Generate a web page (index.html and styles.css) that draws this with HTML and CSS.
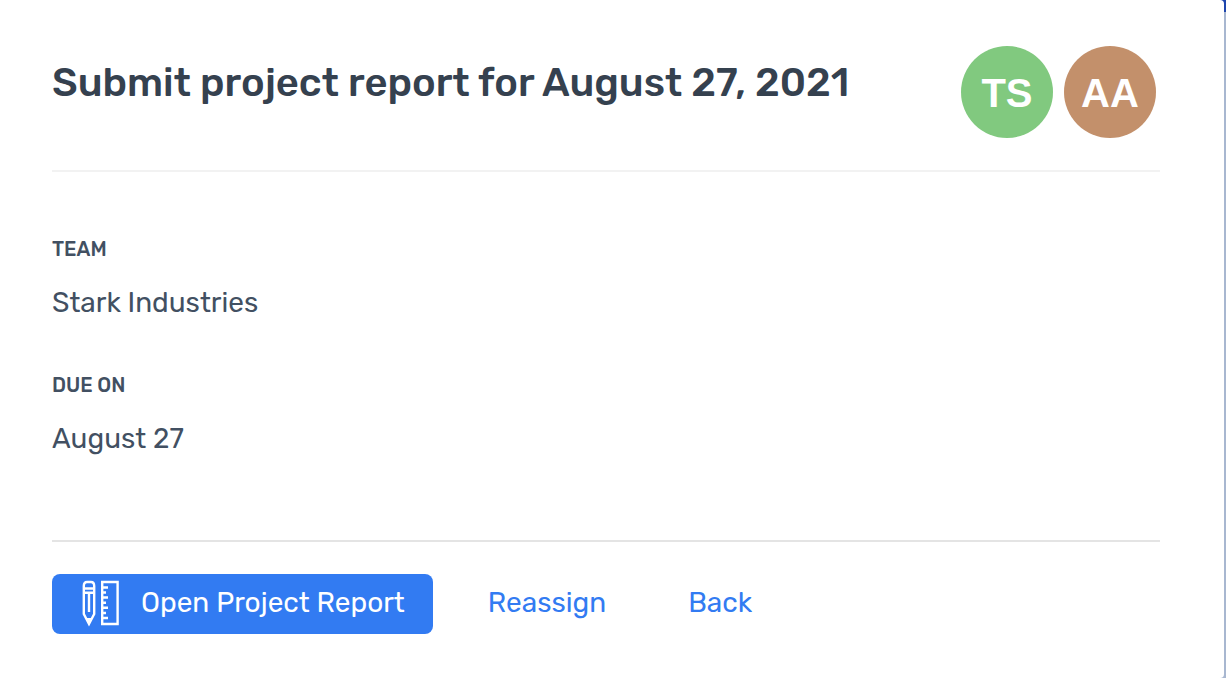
FILE: index.html
```
<!DOCTYPE html>
<html lang="en">
<head>
  <meta charset="UTF-8">
  <title>Submit project report</title>
  <link rel="stylesheet" href="styles.css">
</head>
<body>

  <main class="card">
    <header class="card-header">
      <h1>Submit project report for August 27, 2021</h1>
      <div class="avatars">
        <span class="avatar green">TS</span>
        <span class="avatar brown">AA</span>
      </div>
    </header>

    <dl class="details">
      <dt>TEAM</dt>
      <dd>Stark Industries</dd>
      <dt>DUE ON</dt>
      <dd>August 27</dd>
    </dl>

    <footer class="actions">
      <button type="button" class="primary">
        <svg class="icon" width="38" height="48" viewBox="0 2 38 48" fill="none" stroke="currentColor" stroke-width="2.4" aria-hidden="true">
          <!-- pencil -->
          <path d="M1.800 36V8Q1.800 4 5 4H9Q12.200 4 12.200 8V36L7 46ZM2 10.500H12M2 14.800H12M7 16V34"/>
          <path d="M3.500 40H10.500L7 47.500Z" fill="currentColor" stroke="none"/>
          <!-- ruler -->
          <path d="M20.200 4H35.600V46H20.200ZM20 9.500H26M20 14.500H24M20 19.500H26M20 24.700H24M20 29.800H26M20 35H24M20 40H26"/>
        </svg>
        Open Project Report
      </button>
      <button type="button" class="plain">Reassign</button>
      <button type="button" class="plain">Back</button>
    </footer>
  </main>

</body>
</html>
```

FILE: styles.css
```
body {
  margin: 0;
  background: linear-gradient(#1d45ad 12px, #a8b7d0 12px);
  font-family: Rubik, Roboto, sans-serif;
  color: #425062;
}
.card {
  box-sizing: border-box;
  min-height: 100vh;
  margin-right: 2px;
  padding: 46px 64px 44px 52px;
  background: #fff;
  border-radius: 0 4px 4px 0;
}
.card-header {
  display: flex;
  justify-content: space-between;
  padding-bottom: 32px;
  padding-right: 4px;
  border-bottom: 2px solid #f2f2f2;
}
h1 {
  margin: 13px 0 0;
  font-size: 40px;
  line-height: 48px;
  font-weight: 500;
  color: #35414f;
}
.avatars {
  display: flex;
  gap: 11px;
}
.avatar {
  width: 92px;
  height: 92px;
  border-radius: 50%;
  font: bold 40px/94px "Liberation Sans", sans-serif;
  text-align: center;
  color: #fff;
}
.green {
  background: #81c97f;
}
.brown {
  background: #c3906b;
}
.details {
  margin: 0;
  padding: 65px 0 31px;
}
dt {
  font-size: 20px;
  line-height: 24px;
  font-weight: 500;
}
dd {
  margin: 22px 0 50px;
  font-size: 28px;
  line-height: 40px;
}
.actions {
  display: flex;
  align-items: center;
  padding-top: 32px;
  border-top: 2px solid #e4e4e4;
}
button {
  display: flex;
  align-items: center;
  height: 60px;
  border: none;
  font-family: inherit;
  font-size: 28px;
  cursor: pointer;
}
.primary {
  gap: 21px;
  padding: 0 28px 4px 30px;
  margin-right: 14px;
  border-radius: 8px;
  background: #327bf2;
  color: #fff;
}
.icon {
  margin-top: 4px;
}
.plain {
  padding: 0 41px 4px;
  background: none;
  color: #327bf2;
}
```
